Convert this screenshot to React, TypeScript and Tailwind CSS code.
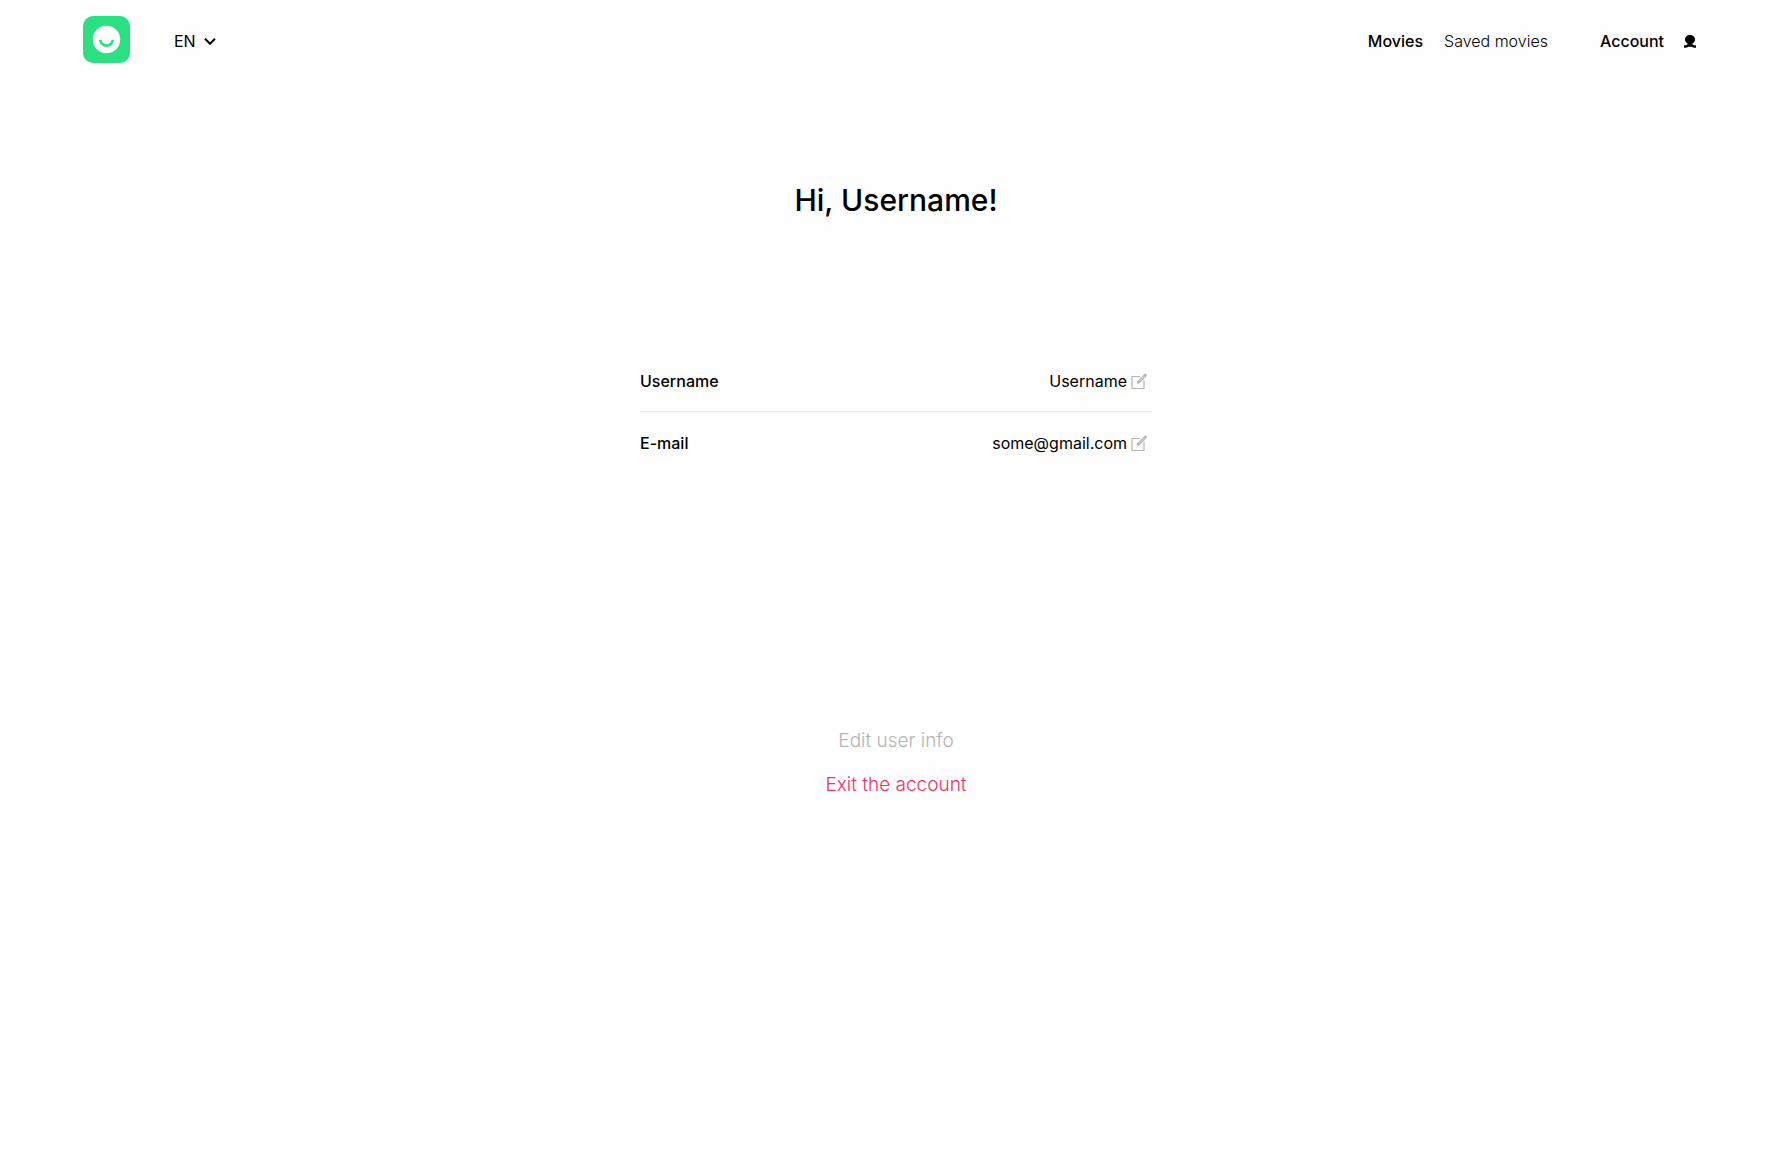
import { useState } from "react";

function Logo() {
  return (
    <svg viewBox="0 0 47 47" className="size-[47px]" aria-hidden="true">
      <rect width="47" height="47" rx="10" fill="#2be080" />
      <circle cx="23.5" cy="23.5" r="13.7" fill="#fff" />
      <path d="M17.2 23.8C17.8 27.4 20.3 29.6 23.5 29.6S29.2 27.4 29.8 23.8" fill="none" stroke="#2be080" strokeWidth="2.6" />
    </svg>
  );
}

function ChevronDown() {
  return (
    <svg viewBox="0 0 12 8" className="h-2 w-3" aria-hidden="true">
      <path d="M1 1.7l5 5 5-5" fill="none" stroke="#000" strokeWidth="2" />
    </svg>
  );
}

function Person() {
  return (
    <svg viewBox="0 0 12 14" className="h-3.5 w-3" aria-hidden="true">
      <path
        d="M6 0.9C3.1 0.9 1 2.9 1 5.4C1 7.3 2.2 8.8 3.8 9.7C3.8 10.6 2.6 10.9 0 11.5V13.8C2.2 13.6 3.4 13.3 4.4 12.7H7.6C8.6 13.3 9.8 13.6 12 13.8V11.5C9.4 10.9 8.2 10.6 8.2 9.7C9.8 8.8 11 7.3 11 5.4C11 2.9 8.9 0.9 6 0.9Z"
        fill="#000"
      />
    </svg>
  );
}

function Pencil() {
  return (
    <svg viewBox="0 0 16 16" className="size-4" fill="none" aria-hidden="true">
      <path d="M9 3.5H1v12h12V7" stroke="#b4b4b4" strokeWidth="1.2" />
      <path d="M7.3 9.2L14.3 2.2" stroke="#b4b4b4" strokeWidth="3" strokeLinecap="round" />
      <path d="M8 8.5L13.5 3" stroke="#dcdcdc" />
    </svg>
  );
}

function Field({ label, value, name, type }: { label: string; value: string; name: string; type: string }) {
  const [text, setText] = useState(value);
  return (
    <div className="flex h-[61px] items-center gap-1 pr-[5px]">
      <label htmlFor={name} className="font-medium">
        {label}
      </label>
      <input
        id={name}
        type={type}
        value={text}
        onChange={(e) => setText(e.target.value)}
        className="min-w-0 flex-1 bg-transparent text-right outline-none"
      />
      <Pencil />
    </div>
  );
}

export default function App() {
  return (
    <div className="min-h-screen bg-[#fefefe] font-[Inter,sans-serif] text-base text-black">
      <header className="flex items-start justify-between pt-4 pr-24 pl-[83px]">
        <div className="flex items-start gap-11">
          <a href="#home" aria-label="Home">
            <Logo />
          </a>
          <button type="button" className="mt-[13px] flex items-center gap-2">
            EN <ChevronDown />
          </button>
        </div>
        <nav className="mt-[13px] flex items-center">
          <a href="#movies" className="font-medium">Movies</a>
          <a href="#saved" className="ml-[21px] font-light">Saved movies</a>
          <a href="#account" className="ml-[52px] flex items-center gap-5 font-medium">
            Account <Person />
          </a>
        </nav>
      </header>
      <main className="mx-auto flex max-w-lg flex-col pt-[119px]">
        <h1 className="text-center text-3xl font-medium">Hi, Username!</h1>
        <form className="mt-[133px] divide-y divide-[#e8e8e8]">
          <Field label="Username" value="Username" name="username" type="text" />
          <Field label="E-mail" value="some@gmail.com" name="email" type="email" />
        </form>
        <div className="mt-[254px] flex flex-col items-center gap-4 text-[19px] leading-7">
          <button type="button" className="font-light text-[#b4b4b4]">Edit user info</button>
          <button type="button" className="font-light text-[#ee3465]">Exit the account</button>
        </div>
      </main>
    </div>
  );
}
